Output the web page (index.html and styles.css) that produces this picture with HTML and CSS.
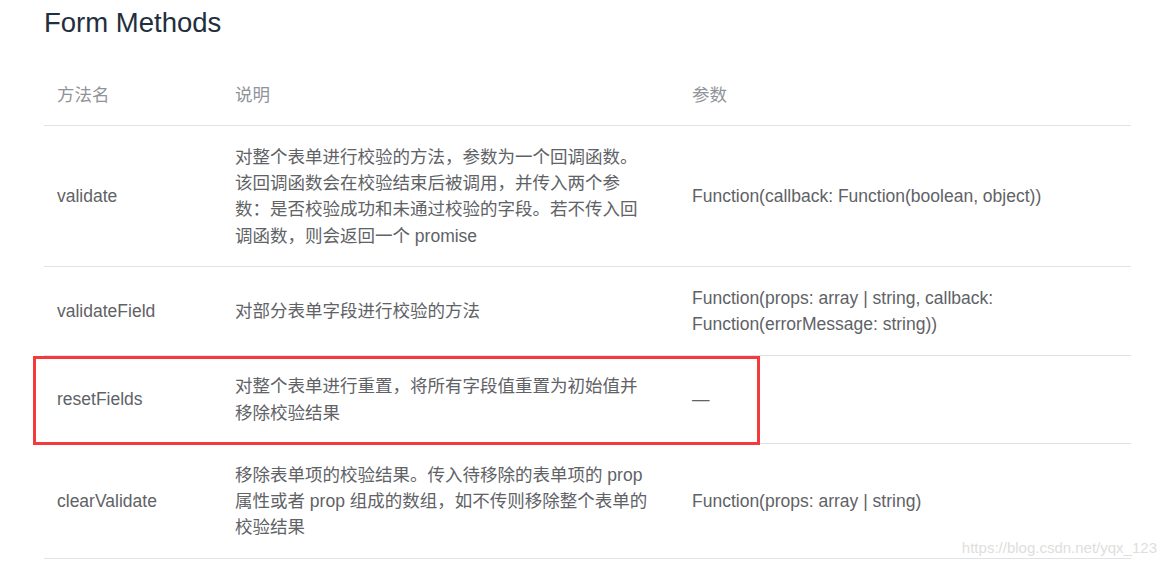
FILE: index.html
```html
<!DOCTYPE html>
<html lang="zh">
<head>
<meta charset="utf-8">
<link rel="stylesheet" href="styles.css">
</head>
<body>
<div class="page">
  <h3 class="title">Form Methods</h3>
  <table class="methods">
    <colgroup>
      <col class="c-name">
      <col class="c-desc">
      <col class="c-param">
    </colgroup>
    <thead>
      <tr><th>方法名</th><th class="desc">说明</th><th>参数</th></tr>
    </thead>
    <tbody>
      <tr>
        <td>validate</td>
        <td class="desc">对整个表单进行校验的方法，参数为一个回调函数。该回调函数会在校验结束后被调用，并传入两个参数：是否校验成功和未通过校验的字段。若不传入回调函数，则会返回一个 promise</td>
        <td>Function(callback: Function(boolean, object))</td>
      </tr>
      <tr>
        <td>validateField</td>
        <td class="desc">对部分表单字段进行校验的方法</td>
        <td>Function(props: array | string, callback: Function(errorMessage: string))</td>
      </tr>
      <tr>
        <td>resetFields</td>
        <td class="desc">对整个表单进行重置，将所有字段值重置为初始值并移除校验结果</td>
        <td>—</td>
      </tr>
      <tr>
        <td>clearValidate</td>
        <td class="desc">移除表单项的校验结果。传入待移除的表单项的 prop 属性或者 prop 组成的数组，如不传则移除整个表单的校验结果</td>
        <td>Function(props: array | string)</td>
      </tr>
    </tbody>
  </table>
</div>
<div class="highlight"></div>
<div class="watermark">https://blog.csdn.net/yqx_123</div>
</body>
</html>
```
FILE: styles.css
```css
html, body {
  margin: 0;
  padding: 0;
  background: #fff;
}
body {
  font-family: "Liberation Sans", "Noto Sans CJK SC", sans-serif;
  color: #606266;
  width: 1166px;
  height: 568px;
  overflow: hidden;
  position: relative;
}
.page {
  padding: 7px 0 0 44px;
  width: 1087px;
}
.title {
  margin: 0 0 26px 0;
  font-size: 27.5px;
  font-weight: normal;
  line-height: 31px;
  color: #1f2f3d;
}
.methods {
  width: 1087px;
  border-collapse: collapse;
  table-layout: fixed;
  font-size: 17.5px;
  line-height: 26.25px;
}
.c-name { width: 178px; }
.c-desc { width: 457px; }
.c-param { width: 452px; }
.methods th,
.methods td {
  text-align: left;
  vertical-align: middle;
  padding: 17.5px 13px;
  border-bottom: 1px solid #dfe2e8;
}
.methods .desc {
  padding-right: 28px;
}
.methods th {
  font-weight: normal;
  color: #909399;
}
.highlight {
  position: absolute;
  left: 33px;
  top: 356px;
  width: 721px;
  height: 83px;
  border: 3px solid #f53a3c;
}
.watermark {
  position: absolute;
  right: 9px;
  top: 539px;
  font-size: 15px;
  color: #dedede;
}
```
